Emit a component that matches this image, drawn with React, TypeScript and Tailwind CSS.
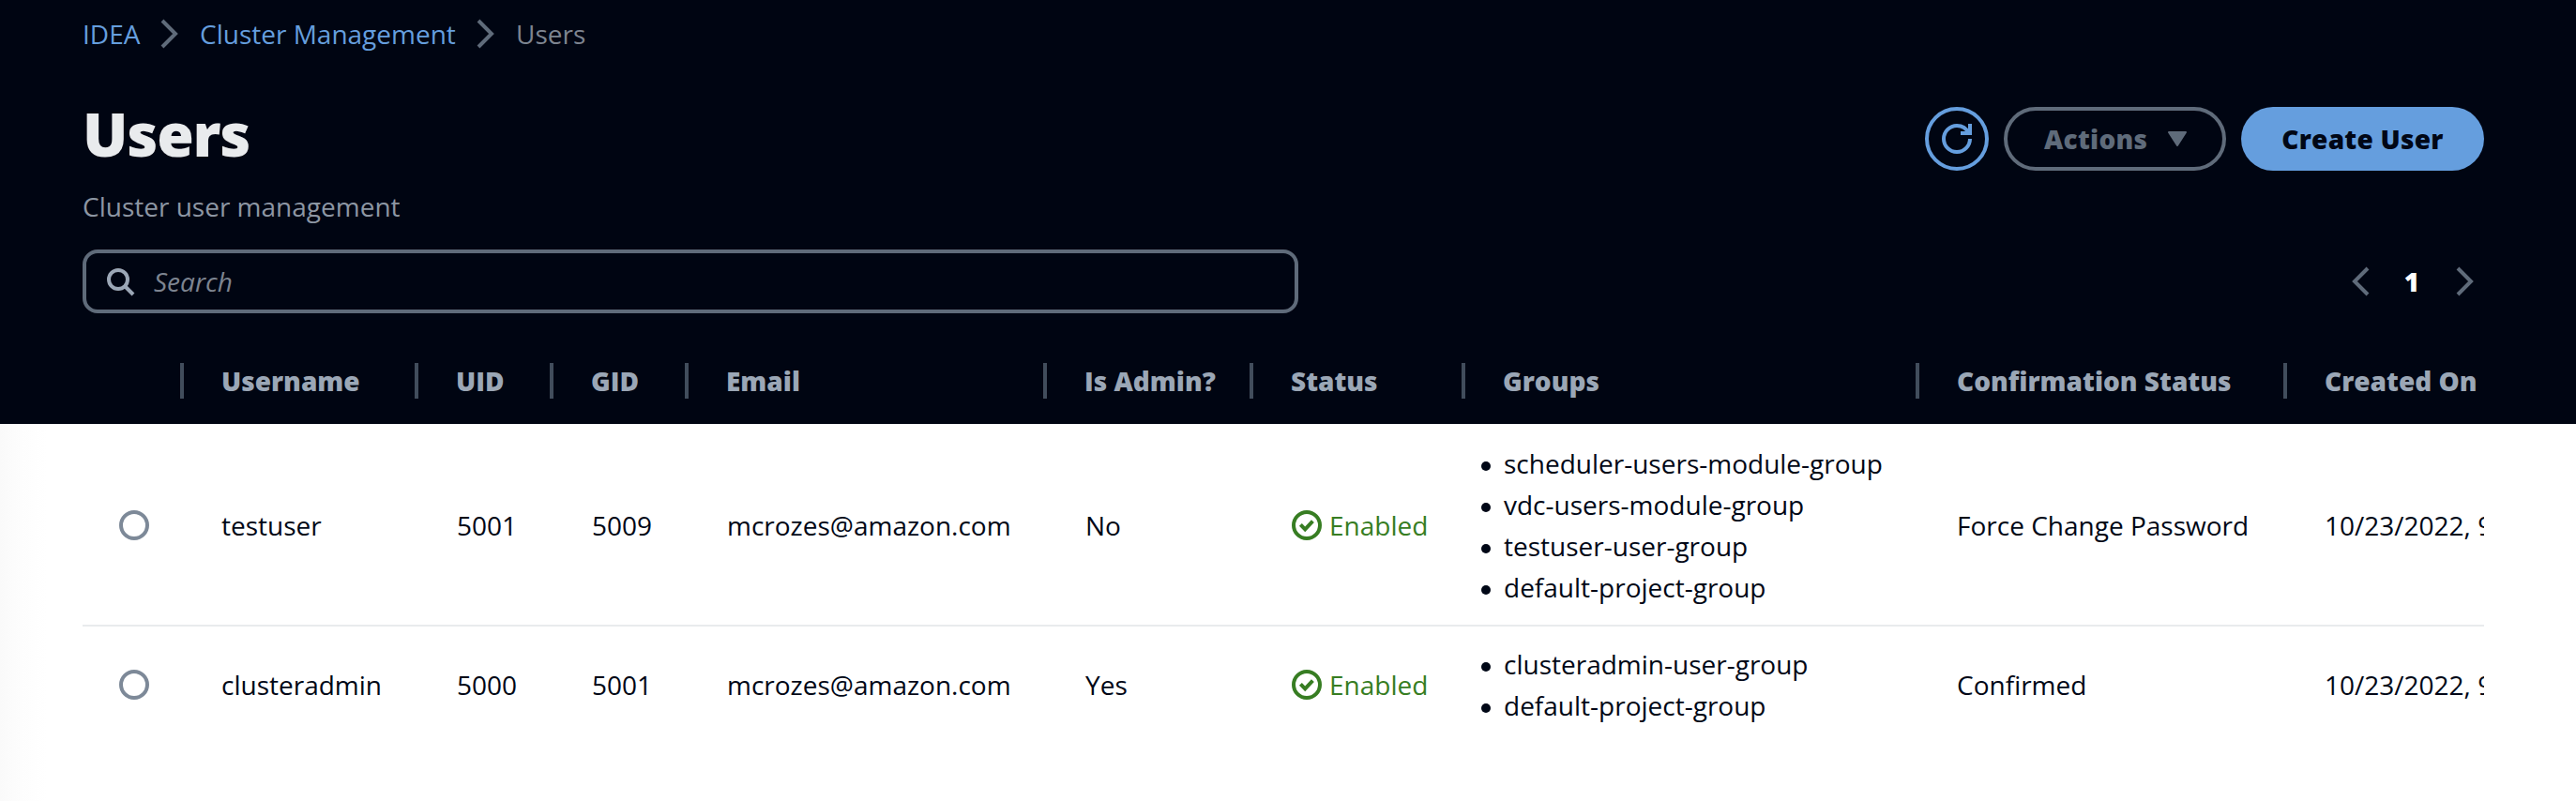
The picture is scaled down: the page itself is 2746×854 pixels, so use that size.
import React from "react";

type User = {
  username: string;
  uid: string;
  gid: string;
  email: string;
  admin: string;
  groups: string[];
  confirmation: string;
  created: string;
};

const users: User[] = [
  {
    username: "testuser",
    uid: "5001",
    gid: "5009",
    email: "mcrozes@amazon.com",
    admin: "No",
    groups: ["scheduler-users-module-group", "vdc-users-module-group", "testuser-user-group", "default-project-group"],
    confirmation: "Force Change Password",
    created: "10/23/2022, 9",
  },
  {
    username: "clusteradmin",
    uid: "5000",
    gid: "5001",
    email: "mcrozes@amazon.com",
    admin: "Yes",
    groups: ["clusteradmin-user-group", "default-project-group"],
    confirmation: "Confirmed",
    created: "10/23/2022, 9",
  },
];

const headers = ["Username", "UID", "GID", "Email", "Is Admin?", "Status", "Groups", "Confirmation Status", "Created On"];

const columns = "grid grid-cols-[108px_250px_144px_144px_382px_220px_226px_484px_392px_400px]";

function Chevron({ flip = false }: { flip?: boolean }) {
  return (
    <svg viewBox="0 0 16 16" className={flip ? "size-8 shrink-0 -scale-x-100" : "size-8 shrink-0"} fill="none" stroke="#5f6b7a" strokeWidth="2">
      <path d="m4 1 7 7-7 7" />
    </svg>
  );
}

function Refresh() {
  return (
    <svg viewBox="0 0 16 16" className="size-8" fill="none" stroke="#659ede" strokeWidth="2">
      <path d="M15 8c0 3.87-3.13 7-7 7s-7-3.13-7-7 3.13-7 7-7c2.79 0 5.2 1.63 6.33 4" />
      <path d="M15 0v5h-5" />
    </svg>
  );
}

function StatusIcon() {
  return (
    <svg viewBox="0 0 16 16" className="size-8" fill="none" stroke="#377d22" strokeWidth="2">
      <circle cx="8" cy="8" r="7" />
      <path d="m4.7 7.7 2.4 2.5 4.1-4.4" />
    </svg>
  );
}

export default function App() {
  return (
    <div className="flex h-[854px] w-[2746px] flex-col overflow-hidden bg-white font-['Open_Sans',sans-serif] text-[28px] leading-[44px] text-[#000716]">
      <header className="flex h-[452px] shrink-0 flex-col bg-[#000512] pt-[14px] pr-[98px] pl-[88px]">
        <nav className="flex h-11 items-center">
          <a className="w-[77px] text-[#659ede]">IDEA</a>
          <Chevron />
          <a className="ml-4 w-[289px] whitespace-nowrap text-[#659ede]">Cluster Management</a>
          <Chevron />
          <span className="ml-4 text-[#7d8490]">Users</span>
        </nav>

        <div className="mt-[44px] flex h-20 items-end justify-between">
          <h1 className="text-[64px] leading-[78px] font-extrabold tracking-[-1.2px] text-[#e9ebed]">Users</h1>
          <div className="flex gap-4">
            <button className="flex size-[68px] items-center justify-center rounded-full border-4 border-[#659ede]">
              <Refresh />
            </button>
            <button className="flex h-[68px] w-[237px] items-center rounded-full border-4 border-[#5f6b7a] pl-[39px] font-extrabold tracking-[0.25px] text-[#5f6b7a]">
              <span className="w-[132px] text-left">Actions</span>
              <svg viewBox="0 0 20 16" className="h-4 w-5" fill="#5f6b7a" stroke="#5f6b7a" strokeWidth="2" strokeLinejoin="round">
                <path d="M1 1h18l-9 14z" />
              </svg>
            </button>
            <button className="h-[68px] w-[259px] rounded-full bg-[#659ede] font-extrabold tracking-[0.25px] text-[#000716]">Create User</button>
          </div>
        </div>

        <p className="mt-4 text-[#8d96a3]">Cluster user management</p>

        <div className="mt-6 flex h-[68px] items-center justify-between">
          <div className="flex h-[68px] w-[1296px] items-center rounded-2xl border-4 border-[#5f6b7a] pl-5">
            <svg viewBox="0 0 16 16" className="size-8" fill="none" stroke="#9ba7b6" strokeWidth="2">
              <circle cx="7" cy="7" r="5" />
              <path d="m15 15-4.5-4.5" />
            </svg>
            <span className="ml-5 text-[#7d8490] italic">Search</span>
          </div>
          <div className="flex items-center pr-1">
            <Chevron flip />
            <span className="w-20 pr-0.5 text-center font-extrabold text-white">1</span>
            <Chevron />
          </div>
        </div>

        <div className={`mt-[53px] h-[38px] w-[2560px] shrink-0 overflow-hidden leading-[38px] ${columns}`}>
          <div className="h-[38px] border-r-4 border-[#414d5c]" />
          {headers.map((label, i) => (
            <div key={label} className={i < 8 ? "flex h-[38px] items-center border-r-4 border-[#414d5c] pl-10" : "flex h-[38px] items-center pl-10"}>
              <span className="font-extrabold whitespace-nowrap text-[#9ba7b6]">{label}</span>
            </div>
          ))}
        </div>
      </header>

      <main className="flex-1 bg-[linear-gradient(to_right,#fafafa,#fdfdfd_22px,#ffffff_50px)] px-[88px]">
        <div className="w-[2560px] overflow-hidden">
          {users.map((u, i) => (
            <div key={u.username} className={`items-center py-[18px] ${i === 0 ? "border-t-2 border-b-2 border-t-transparent border-b-[#e9ebed]" : ""} w-[2750px] ${columns}`}>
              <div className="pl-[39px]">
                <div className="size-8 rounded-full border-4 border-[#7d8998]" />
              </div>
              <div className="pl-10">{u.username}</div>
              <div className="pl-[41px]">{u.uid}</div>
              <div className="pl-[41px]">{u.gid}</div>
              <div className="pl-[41px]">{u.email}</div>
              <div className="pl-[41px]">{u.admin}</div>
              <div className="flex items-center gap-2 pl-[41px] text-[#377d22]">
                <StatusIcon />
                <span>Enabled</span>
              </div>
              <ul className="pl-[17px]">
                {u.groups.map((g) => (
                  <li key={g} className="flex items-center gap-[14px] whitespace-nowrap">
                    <span className="mt-[5px] size-[10px] rounded-full bg-[#000716]" />
                    {g}
                  </li>
                ))}
              </ul>
              <div className="pl-10">{u.confirmation}</div>
              <div className="pl-10 whitespace-nowrap">{u.created}</div>
            </div>
          ))}
        </div>
      </main>
    </div>
  );
}
